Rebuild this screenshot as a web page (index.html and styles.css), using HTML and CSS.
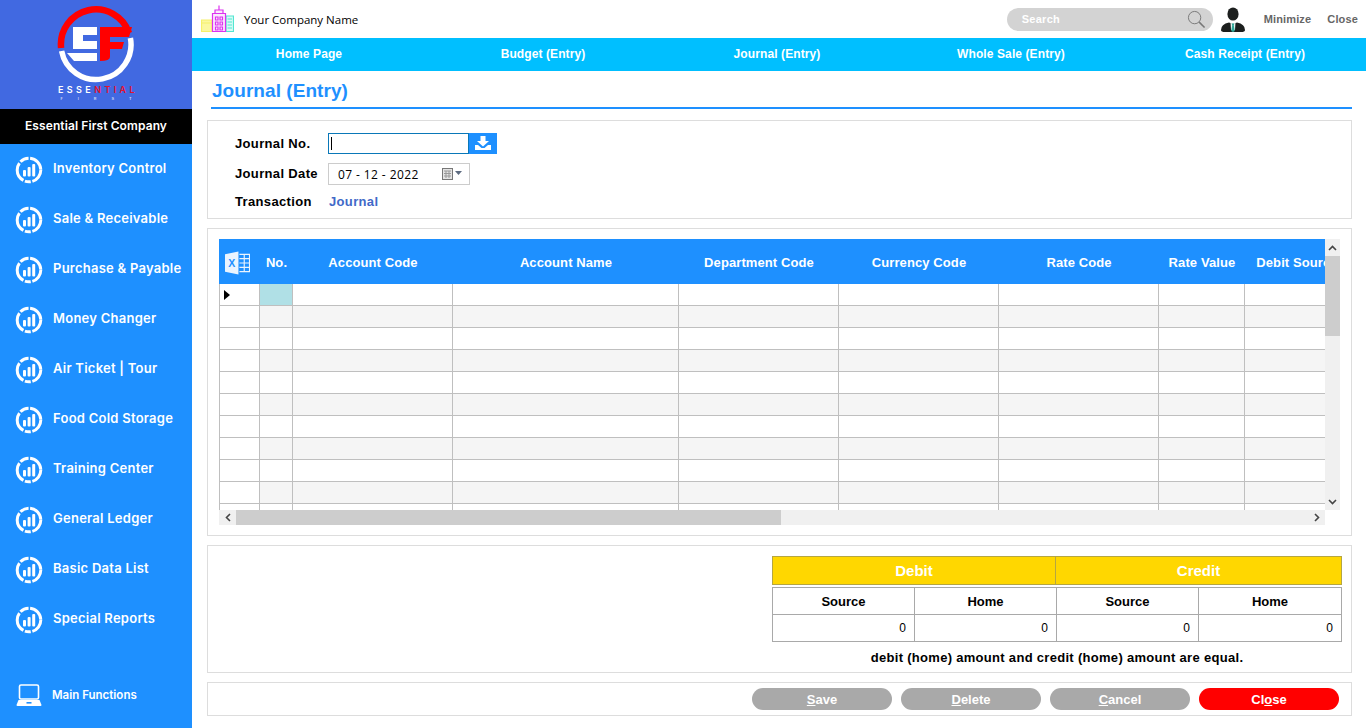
FILE: index.html
```html
<!DOCTYPE html>
<html lang="en">
<head>
    <meta charset="UTF-8">
    <meta name="viewport" content="width=device-width, initial-scale=1.0">
    <title>Journal (Entry)</title>
    <link rel="stylesheet" href="styles.css">
</head>
<body>
    <svg class="defs" width="0" height="0">
        <symbol id="chart" viewBox="0 0 28 28">
            <circle cx="14" cy="14" r="11.8" fill="none" stroke="#fff" stroke-width="3" stroke-dasharray="15 1.6 6 1.6 20 1.6 9 1.6 17 1.6"/>
            <rect x="8" y="14" width="3" height="6.5" rx="1" fill="#fff"/>
            <rect x="12.6" y="11" width="3" height="9.5" rx="1" fill="#fff"/>
            <rect x="17.2" y="8" width="3" height="12.5" rx="1" fill="#fff"/>
        </symbol>
    </svg>

    <aside class="sidebar">
        <div class="logo">
            <svg class="logo-mark" width="80" height="80" viewBox="56 4 80 80">
                <path d="M61.6 51 A35 35 0 0 0 130.4 38" fill="none" stroke="#fff" stroke-width="5.5"/>
                <path d="M61.1 48 A35 35 0 0 1 129 33" fill="none" stroke="#f00" stroke-width="6.5"/>
                <path d="M73 27 H97 V35 H83 V41 H97 V49 H73 Z" fill="#fff"/>
                <path d="M67 53 H97 V61 H74 Z" fill="#fff"/>
                <path d="M100 27 H132 L129 37 H110 V42 H124 L122 49 H110 V57 Q110 61 100 61 Z" fill="#f00"/>
            </svg>
            <div class="logo-name">ESSE<span>NTIAL</span></div>
            <div class="logo-sub">FIRST</div>
        </div>
        <div class="company">Essential First Company</div>
        <ul class="menu">
            <li><svg width="28" height="28"><use href="#chart"/></svg>Inventory Control</li>
            <li><svg width="28" height="28"><use href="#chart"/></svg>Sale &amp; Receivable</li>
            <li><svg width="28" height="28"><use href="#chart"/></svg>Purchase &amp; Payable</li>
            <li><svg width="28" height="28"><use href="#chart"/></svg>Money Changer</li>
            <li><svg width="28" height="28"><use href="#chart"/></svg>Air Ticket | Tour</li>
            <li><svg width="28" height="28"><use href="#chart"/></svg>Food Cold Storage</li>
            <li><svg width="28" height="28"><use href="#chart"/></svg>Training Center</li>
            <li><svg width="28" height="28"><use href="#chart"/></svg>General Ledger</li>
            <li><svg width="28" height="28"><use href="#chart"/></svg>Basic Data List</li>
            <li><svg width="28" height="28"><use href="#chart"/></svg>Special Reports</li>
        </ul>
        <div class="main-functions">
            <svg width="26" height="22" viewBox="0 0 26 22">
                <rect x="3.5" y="1" width="19" height="14" rx="1.5" fill="none" stroke="#fff" stroke-width="1.6"/>
                <path d="M2.5 16 H23.5 L25.5 21 Q25.5 22 24.5 22 H1.5 Q.5 22 .5 21 Z" fill="#fff"/>
                <rect x="10.5" y="18" width="5" height="1.6" fill="#1e90ff"/>
            </svg>
            Main Functions
        </div>
    </aside>

    <div class="content">
        <header class="topbar">
            <svg class="city" width="33" height="28" viewBox="0 0 33 28">
                <path d="M.5 15 H11 V26.5 H.5 Z M.5 18 H11" fill="#fbf8a0" stroke="#f6f06a" stroke-width="1.2"/>
                <path d="M25 11 H32.5 V26.5 H25 Z M26.5 14 H31 M26.5 17 H31 M26.5 20 H31 M26.5 23 H31" fill="#d8fbf5" stroke="#52e6d2" stroke-width="1.2"/>
                <path d="M11.5 26.5 V8.5 H24.5 V26.5 Z M14 5 H22 V8.5 H14 Z M18 .5 V5 M14.5 12 H17 V15 H14.5 Z M19 12 H21.5 V15 H19 Z M14.5 17 H17 V20 H14.5 Z M19 17 H21.5 V20 H19 Z M14.5 22 H17 V25 H14.5 Z M19 22 H21.5 V25 H19 Z" fill="#fbeafd" stroke="#dc32f0" stroke-width="1.2"/>
            </svg>
            <span class="company-name">Your Company Name</span>
            <div class="search">
                <span>Search</span>
                <svg width="19" height="19" viewBox="0 0 20 20">
                    <circle cx="8" cy="8" r="6.5" fill="none" stroke="#777" stroke-width="1"/>
                    <path d="M12.8 12.8 L18.5 18.5" stroke="#777" stroke-width="1.6"/>
                </svg>
            </div>
            <svg class="avatar" width="24" height="25" viewBox="0 0 24 25">
                <ellipse cx="12" cy="7" rx="5.6" ry="6.6" fill="#1c1f1e"/>
                <path d="M0 23 Q0 17 8 15.5 L12 17 L16 15.5 Q24 17 24 23 Q24 25 20 25 H4 Q0 25 0 23 Z" fill="#1c1f1e"/>
                <path d="M9.5 15.5 L12 17 L14.5 15.5 L14 23 H10 Z" fill="#e8f2ef"/>
                <path d="M10.8 16.5 H13.2 L12.8 18.5 L13.8 24 L12 25 L10.2 24 L11.2 18.5 Z" fill="#2fa89a"/>
            </svg>
            <span class="top-link minimize">Minimize</span>
            <span class="top-link">Close</span>
        </header>

        <nav class="nav">
            <a>Home Page</a>
            <a>Budget (Entry)</a>
            <a>Journal (Entry)</a>
            <a>Whole Sale (Entry)</a>
            <a>Cash Receipt (Entry)</a>
        </nav>

        <main class="page">
            <h1 class="title">Journal (Entry)</h1>

            <section class="panel form-panel">
                <div class="form-row">
                    <label>Journal No.</label>
                    <div class="input-group">
                        <div class="text-input"><i class="caret"></i></div>
                        <button class="load-btn">
                            <svg width="16" height="14" viewBox="0 0 16 14">
                                <path d="M5.5 0 H10.5 V5 H14 L8 10.5 L2 5 H5.5 Z" fill="#fff"/>
                                <path d="M0 9 H3 L6.5 12 H9.5 L13 9 H16 V14 H0 Z" fill="#fff"/>
                            </svg>
                        </button>
                    </div>
                </div>
                <div class="form-row">
                    <label>Journal Date</label>
                    <div class="date-input">
                        <span>07 - 12 - 2022</span>
                        <svg width="22" height="12" viewBox="0 0 22 12">
                            <rect x=".5" y=".5" width="10" height="11" fill="#e4e4e4" stroke="#777"/>
                            <path d="M2 3 H9 M2 5.5 H9 M2 8 H9 M4 3 V10 M7 3 V10" stroke="#999"/>
                            <path d="M13 3 H20 L16.5 7 Z" fill="#5d6b80"/>
                        </svg>
                    </div>
                </div>
                <div class="form-row">
                    <label>Transaction</label>
                    <span class="trans-value">Journal</span>
                </div>
            </section>

            <section class="panel grid-panel">
                <div class="grid-top">
                    <div class="grid-view">
                        <table class="grid">
                            <colgroup>
                                <col class="c-mark"><col class="c-no"><col class="c-code"><col class="c-name">
                                <col class="c-code"><col class="c-code"><col class="c-code"><col class="c-rate"><col class="c-debit">
                            </colgroup>
                            <thead>
                                <tr>
                                    <th class="xl">
                                        <svg width="25" height="24" viewBox="0 0 26 24">
                                            <path d="M0 3 L14 0 V24 L0 21 Z" fill="#eaf4ff"/>
                                            <text x="3.5" y="16" class="xl-x">X</text>
                                            <path d="M15 3 H25.5 V21 H15 M15 7.5 H25.5 M15 12 H25.5 M15 16.5 H25.5 M20 3 V21" fill="none" stroke="#eaf4ff" stroke-width="1.2"/>
                                        </svg>
                                    </th>
                                    <th>No.</th>
                                    <th>Account Code</th>
                                    <th>Account Name</th>
                                    <th>Department Code</th>
                                    <th>Currency Code</th>
                                    <th>Rate Code</th>
                                    <th>Rate Value</th>
                                    <th>Debit Source</th>
                                </tr>
                            </thead>
                            <tbody>
                                <tr><td class="mark"><i class="arrow"></i></td><td class="selected"></td><td></td><td></td><td></td><td></td><td></td><td></td><td></td></tr>
                                <tr><td class="mark"></td><td></td><td></td><td></td><td></td><td></td><td></td><td></td><td></td></tr>
                                <tr><td class="mark"></td><td></td><td></td><td></td><td></td><td></td><td></td><td></td><td></td></tr>
                                <tr><td class="mark"></td><td></td><td></td><td></td><td></td><td></td><td></td><td></td><td></td></tr>
                                <tr><td class="mark"></td><td></td><td></td><td></td><td></td><td></td><td></td><td></td><td></td></tr>
                                <tr><td class="mark"></td><td></td><td></td><td></td><td></td><td></td><td></td><td></td><td></td></tr>
                                <tr><td class="mark"></td><td></td><td></td><td></td><td></td><td></td><td></td><td></td><td></td></tr>
                                <tr><td class="mark"></td><td></td><td></td><td></td><td></td><td></td><td></td><td></td><td></td></tr>
                                <tr><td class="mark"></td><td></td><td></td><td></td><td></td><td></td><td></td><td></td><td></td></tr>
                                <tr><td class="mark"></td><td></td><td></td><td></td><td></td><td></td><td></td><td></td><td></td></tr>
                                <tr><td class="mark"></td><td></td><td></td><td></td><td></td><td></td><td></td><td></td><td></td></tr>
                            </tbody>
                        </table>
                    </div>
                    <div class="vbar">
                        <span class="sb-btn"><svg width="9" height="6" viewBox="0 0 9 6"><path d="M1 5 L4.5 1.5 L8 5" fill="none" stroke="#444" stroke-width="1.6"/></svg></span>
                        <div class="vthumb"></div>
                        <span class="sb-btn sb-end"><svg width="9" height="6" viewBox="0 0 9 6"><path d="M1 1 L4.5 4.5 L8 1" fill="none" stroke="#444" stroke-width="1.6"/></svg></span>
                    </div>
                </div>
                <div class="hbar">
                    <span class="sb-btn"><svg width="6" height="9" viewBox="0 0 6 9"><path d="M5 1 L1.5 4.5 L5 8" fill="none" stroke="#444" stroke-width="1.6"/></svg></span>
                    <div class="hthumb"></div>
                    <span class="sb-btn sb-end"><svg width="6" height="9" viewBox="0 0 6 9"><path d="M1 1 L4.5 4.5 L1 8" fill="none" stroke="#444" stroke-width="1.6"/></svg></span>
                </div>
            </section>

            <section class="panel totals-panel">
                <div class="totals">
                    <div class="totals-head">
                        <div>Debit</div>
                        <div>Credit</div>
                    </div>
                    <table class="totals-table">
                        <tr><th>Source</th><th>Home</th><th>Source</th><th>Home</th></tr>
                        <tr><td>0</td><td>0</td><td>0</td><td>0</td></tr>
                    </table>
                    <p class="totals-msg">debit (home) amount and credit (home) amount are equal.</p>
                </div>
            </section>

            <section class="panel actions">
                <button class="pill"><u>S</u>ave</button>
                <button class="pill"><u>D</u>elete</button>
                <button class="pill"><u>C</u>ancel</button>
                <button class="pill pill-close">Cl<u>o</u>se</button>
            </section>
        </main>
    </div>
</body>
</html>
```

FILE: styles.css
```css
* {
    box-sizing: border-box;
}
html, body {
    height: 100%;
}
body {
    margin: 0;
    display: flex;
    height: 728px;
    overflow: hidden;
    background: #fff;
    color: #000;
    font-family: "Liberation Sans", Arial, sans-serif;
}
.defs {
    position: absolute;
}

/* sidebar */
.sidebar {
    width: 192px;
    flex: none;
    display: flex;
    flex-direction: column;
    background: #1e90ff;
    color: #fff;
    font-family: Inter, "Liberation Sans", sans-serif;
}
.logo {
    height: 109px;
    background: #4169e1;
    padding: 4px 0 0 0;
    display: flex;
    flex-direction: column;
    align-items: center;
}
.logo-mark {
    display: block;
}
.logo-name {
    font-size: 9px;
    font-weight: 600;
    letter-spacing: 3.4px;
    margin: 1px 0 0 4px;
    line-height: 10px;
}
.logo-name span {
    color: #e8112d;
}
.logo-sub {
    font-size: 4px;
    letter-spacing: 15px;
    margin-left: 15px;
    line-height: 7px;
}
.company {
    height: 35px;
    background: #000;
    font-size: 12px;
    font-weight: 600;
    letter-spacing: .1px;
    padding-bottom: 2px;
    display: flex;
    align-items: center;
    justify-content: center;
}
.menu {
    list-style: none;
    margin: 0;
    padding: 0;
}
.menu li {
    height: 50px;
    display: flex;
    align-items: center;
    padding-left: 15px;
    gap: 10px;
    font-size: 13px;
    font-weight: 600;
    letter-spacing: .25px;
    padding-bottom: 3px;
}
.menu svg {
    margin-top: 5px;
}
.main-functions {
    margin-top: auto;
    height: 66px;
    padding: 0 0 0 16px;
    display: flex;
    align-items: center;
    gap: 10px;
    font-size: 11.5px;
    font-weight: 600;
}

/* top */
.content {
    flex: 1;
    min-width: 0;
    display: flex;
    flex-direction: column;
}
.topbar {
    height: 38px;
    display: flex;
    align-items: center;
    padding: 0 8px 0 9px;
}
.company-name {
    font-family: "Open Sans", sans-serif;
    font-size: 11.5px;
    margin-left: 10px;
}
.search {
    margin-left: auto;
    width: 206px;
    height: 23px;
    border-radius: 12px;
    background: #d3d3d3;
    display: flex;
    align-items: center;
    justify-content: space-between;
    padding: 0 7px 0 15px;
    color: #fff;
    font-size: 11px;
    font-weight: bold;
    letter-spacing: .3px;
}
.avatar {
    margin-left: 8px;
}
.top-link {
    font-size: 11px;
    font-weight: bold;
    letter-spacing: .15px;
    color: #666;
    margin-left: 16px;
}
.minimize {
    margin-left: 19px;
}
.nav {
    height: 33px;
    background: #00bfff;
    display: grid;
    grid-template-columns: repeat(5, 1fr);
    padding: 0 4px 2px 0;
    align-items: center;
    text-align: center;
    color: #fff;
    font-size: 12px;
    font-weight: bold;
    letter-spacing: .1px;
}

/* page */
.page {
    flex: 1;
    padding: 0 14px 0 15px;
}
.title {
    margin: 0 0 11px 4px;
    height: 38px;
    padding: 8px 0 0 1px;
    border-bottom: 2px solid #1e90ff;
    color: #1e90ff;
    font-size: 19px;
    line-height: 24px;
    font-weight: bold;
    letter-spacing: .05px;
}
.panel {
    border: 1px solid #ddd;
    margin-bottom: 9px;
}
.form-panel {
    height: 99px;
    padding: 7px 0 0 27px;
}
.form-row {
    display: flex;
    align-items: center;
    height: 30px;
    font-size: 13px;
    font-weight: bold;
    letter-spacing: .35px;
}
.form-row:last-child {
    height: 26px;
}
.form-row label {
    width: 93px;
}
.input-group {
    display: flex;
    height: 21px;
}
.text-input {
    width: 141px;
    border: 1px solid #0a78b8;
    background: #fff;
    padding: 3px 2px;
}
.caret {
    display: block;
    width: 1px;
    height: 13px;
    background: #000;
}
.load-btn {
    width: 28px;
    border: none;
    padding: 0;
    background: #1e90ff;
    display: flex;
    align-items: center;
    justify-content: center;
}
.date-input {
    width: 142px;
    height: 22px;
    margin-top: 2px;
    border: 1px solid #ccc;
    display: flex;
    align-items: center;
    justify-content: space-between;
    padding: 0 5px 0 9px;
    font-family: "Open Sans", sans-serif;
    font-weight: normal;
    font-size: 12px;
    letter-spacing: .4px;
}
.trans-value {
    color: #4169c8;
    margin-left: 1px;
}

/* grid */
.grid-panel {
    height: 308px;
    padding: 10px 11px 0 11px;
}
.grid-top {
    display: flex;
    height: 271px;
    width: 1121px;
}
.grid-view {
    width: 1106px;
    overflow: hidden;
    background: #fff;
}
.grid {
    table-layout: fixed;
    width: 1130px;
    border-collapse: separate;
    border-spacing: 0;
}
.c-mark { width: 41px; }
.c-no { width: 33px; }
.c-code { width: 160px; }
.c-name { width: 226px; }
.c-rate { width: 86px; }
.c-debit { width: 104px; }
.grid th {
    height: 45px;
    background: #1e90ff;
    color: #fff;
    font-size: 13px;
    letter-spacing: .1px;
    padding: 2px 0 0;
    white-space: nowrap;
    overflow: hidden;
}
.grid th.xl {
    text-align: left;
    padding: 2px 0 0 6px;
    line-height: 0;
}
.xl-x {
    font-size: 11px;
    font-weight: bold;
    fill: #1e90ff;
}
.grid td {
    height: 22px;
    padding: 0;
    border-right: 1px solid #bfbfbf;
    border-bottom: 1px solid #bfbfbf;
}
.grid tbody tr:nth-child(even) td {
    background: #f5f5f5;
}
.grid tbody td.mark,
.grid tbody tr:nth-child(even) td.mark {
    background: #fff;
    border-left: 1px solid #bfbfbf;
}
.grid td.selected {
    background: #b0e0e6;
}
.arrow {
    display: block;
    width: 0;
    height: 0;
    margin-left: 4px;
    border-left: 6px solid #000;
    border-top: 5px solid transparent;
    border-bottom: 5px solid transparent;
}
.vbar {
    width: 15px;
    background: #f0f0f0;
    display: flex;
    flex-direction: column;
}
.vbar .sb-btn {
    height: 17px;
    display: flex;
    align-items: center;
    justify-content: center;
}
.vbar .sb-end {
    margin-top: auto;
}
.vthumb {
    height: 80px;
    background: #cdcdcd;
}
.hbar {
    width: 1106px;
    height: 15px;
    background: #f0f0f0;
    display: flex;
}
.hbar .sb-btn {
    width: 17px;
    display: flex;
    align-items: center;
    justify-content: center;
}
.hbar .sb-end {
    margin-left: auto;
}
.hthumb {
    width: 545px;
    background: #cdcdcd;
}

/* totals */
.totals-panel {
    height: 128px;
    padding: 10px 9px 0 0;
    display: flex;
    justify-content: flex-end;
}
.totals {
    width: 570px;
}
.totals-head {
    display: grid;
    grid-template-columns: 282px 286px;
    height: 29px;
    background: #ffd700;
    border: 1px solid #b5a642;
    color: #fff;
    font-size: 15px;
    font-weight: bold;
    text-align: center;
    line-height: 27px;
}
.totals-head div + div {
    border-left: 1px solid #b5a642;
}
.totals-table {
    width: 570px;
    margin-top: 2px;
    table-layout: fixed;
    border-collapse: collapse;
    font-size: 13px;
}
.totals-table th,
.totals-table td {
    border: 1px solid #a9a9a9;
    height: 27px;
    padding: 0;
}
.totals-table th:nth-child(-n+3) {
    width: 142px;
}
.totals-table td {
    text-align: right;
    font-size: 12px;
    padding-right: 8px;
}
.totals-msg {
    margin: 8px 0 0;
    text-align: center;
    font-size: 13px;
    font-weight: bold;
    letter-spacing: .3px;
    line-height: 15px;
}

/* buttons */
.actions {
    height: 34px;
    margin-bottom: 0;
    display: flex;
    justify-content: flex-end;
    align-items: center;
    gap: 9px;
    padding: 0 12px 0 0;
}
.pill {
    width: 140px;
    height: 22px;
    border: none;
    border-radius: 11px;
    padding: 0;
    background: #a9a9a9;
    color: #fff;
    font-family: "Liberation Sans", Arial, sans-serif;
    font-size: 13px;
    font-weight: bold;
}
.pill-close {
    background: #f00;
}
```
